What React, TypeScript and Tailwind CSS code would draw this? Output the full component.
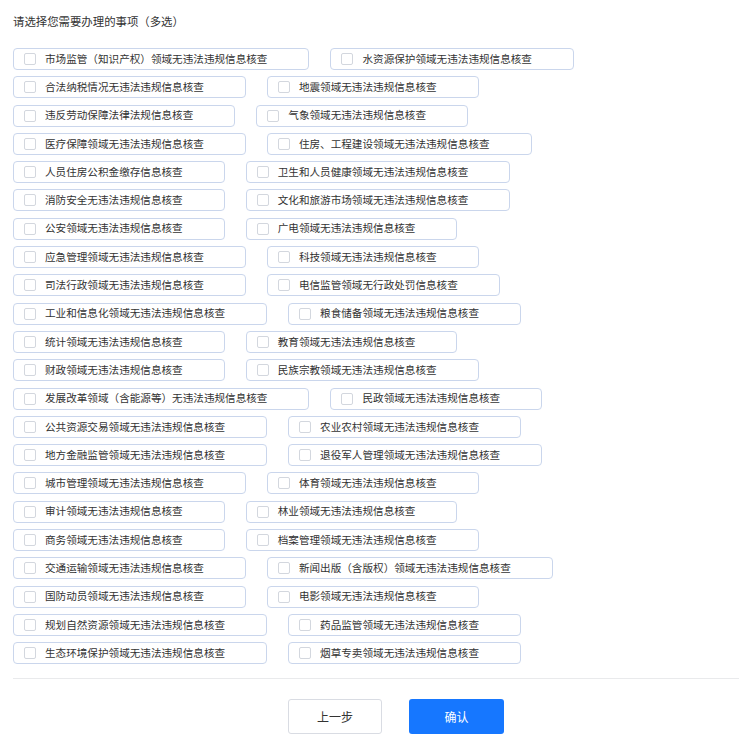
const rows: [string, string][] = [
    ["市场监管（知识产权）领域无违法违规信息核查", "水资源保护领域无违法违规信息核查"],
    ["合法纳税情况无违法违规信息核查", "地震领域无违法违规信息核查"],
    ["违反劳动保障法律法规信息核查", "气象领域无违法违规信息核查"],
    ["医疗保障领域无违法违规信息核查", "住房、工程建设领域无违法违规信息核查"],
    ["人员住房公积金缴存信息核查", "卫生和人员健康领域无违法违规信息核查"],
    ["消防安全无违法违规信息核查", "文化和旅游市场领域无违法违规信息核查"],
    ["公安领域无违法违规信息核查", "广电领域无违法违规信息核查"],
    ["应急管理领域无违法违规信息核查", "科技领域无违法违规信息核查"],
    ["司法行政领域无违法违规信息核查", "电信监管领域无行政处罚信息核查"],
    ["工业和信息化领域无违法违规信息核查", "粮食储备领域无违法违规信息核查"],
    ["统计领域无违法违规信息核查", "教育领域无违法违规信息核查"],
    ["财政领域无违法违规信息核查", "民族宗教领域无违法违规信息核查"],
    ["发展改革领域（含能源等）无违法违规信息核查", "民政领域无违法违规信息核查"],
    ["公共资源交易领域无违法违规信息核查", "农业农村领域无违法违规信息核查"],
    ["地方金融监管领域无违法违规信息核查", "退役军人管理领域无违法违规信息核查"],
    ["城市管理领域无违法违规信息核查", "体育领域无违法违规信息核查"],
    ["审计领域无违法违规信息核查", "林业领域无违法违规信息核查"],
    ["商务领域无违法违规信息核查", "档案管理领域无违法违规信息核查"],
    ["交通运输领域无违法违规信息核查", "新闻出版（含版权）领域无违法违规信息核查"],
    ["国防动员领域无违法违规信息核查", "电影领域无违法违规信息核查"],
    ["规划自然资源领域无违法违规信息核查", "药品监管领域无违法违规信息核查"],
    ["生态环境保护领域无违法违规信息核查", "烟草专卖领域无违法违规信息核查"],
];

function CheckItem({ label }: { label: string }) {
    return (
        <label className="flex items-center h-[22px] pl-[10px] pr-[41px] border border-[#cad6ec] rounded-[4px] bg-white cursor-pointer">
            <span className="w-[12px] h-[12px] border border-[#d3d7de] rounded-[2px] bg-white shrink-0" />
            <span className="ml-[9px] text-[10.6px] leading-none text-[#333] whitespace-nowrap">{label}</span>
        </label>
    );
}

export default function App() {
    return (
        <div
            className="w-[739px] h-[752px] overflow-hidden bg-white pl-[13px]"
            style={{ fontFamily: '"Noto Sans CJK SC", "Noto Sans", sans-serif' }}
        >
            <div className="pt-[11px] mb-[17px] text-[11.4px] leading-[20px] text-[#333]">
                请选择您需要办理的事项（多选）
            </div>
            <div className="flex flex-col gap-[6.3px]">
                {rows.map(([left, right]) => (
                    <div key={left} className="flex gap-[21px]">
                        <CheckItem label={left} />
                        <CheckItem label={right} />
                    </div>
                ))}
            </div>
            <div className="mt-[14px] h-px bg-[#e9eaec]" />
            <div className="mt-[20px] w-[766px] flex justify-center gap-[27px]">
                <button className="w-[94px] h-[35px] border border-[#d9dce3] rounded-[3px] bg-white text-[12px] text-[#333]">
                    上一步
                </button>
                <button className="w-[95px] h-[35px] rounded-[3px] bg-[#1677ff] text-[12px] text-white">
                    确认
                </button>
            </div>
        </div>
    );
}
